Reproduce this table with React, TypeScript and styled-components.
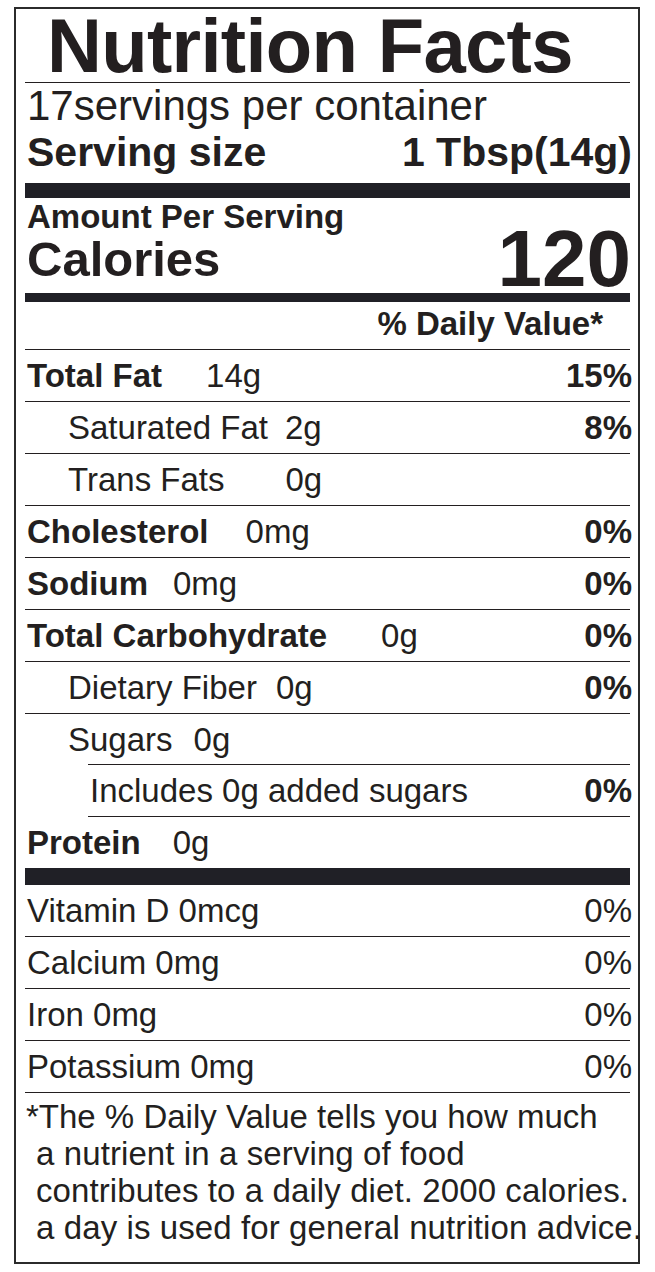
import React from "react";
import styled, { createGlobalStyle } from "styled-components";

const GlobalStyle = createGlobalStyle`
  html, body { margin: 0; padding: 0; background: #ffffff; }
  body {
    font-family: "Liberation Sans", Arial, Helvetica, sans-serif;
    color: #231f20;
  }
`;

const INK = "#231f20";
const BAR = "#202026";

const Label = styled.section`
  box-sizing: border-box;
  width: 626px;
  margin: 7px 0 0 14px;
  border: 2px solid #2b2b2b;
  padding: 0 8px 0 9px;
  display: flex;
  flex-direction: column;
`;

const Title = styled.h1`
  margin: 0;
  padding-left: 22px;
  font-size: 76px;
  line-height: 73px;
  font-weight: 700;
  letter-spacing: -0.7px;
  border-bottom: 1px solid ${INK};
  white-space: nowrap;
`;

const ServingBlock = styled.div`
  display: flex;
  flex-direction: column;
  padding: 1px 0 7px 2px;
`;

const Servings = styled.div`
  font-size: 42px;
  line-height: 44px;
  white-space: nowrap;
`;

const ServingSize = styled.div`
  display: flex;
  justify-content: space-between;
  font-size: 41px;
  line-height: 48px;
  font-weight: 700;
  margin-right: -2px;
  white-space: nowrap;
`;

const Bar = styled.div<{ $h: number }>`
  height: ${(p) => p.$h}px;
  background: ${BAR};
`;

const CalorieBlock = styled.div`
  display: flex;
  justify-content: space-between;
  align-items: flex-end;
  padding: 2px 0 0 2px;
  height: 95px;
  box-sizing: border-box;
`;

const CalorieLeft = styled.div`
  display: flex;
  flex-direction: column;
  padding-bottom: 9px;
`;

const AmountPer = styled.div`
  font-size: 33px;
  line-height: 34px;
  font-weight: 700;
`;

const CaloriesWord = styled.div`
  font-size: 49px;
  line-height: 50px;
  font-weight: 700;
`;

const CalorieNumber = styled.div`
  font-size: 80px;
  line-height: 64px;
  font-weight: 700;
  margin-bottom: 2px;
  margin-right: -1px;
`;

const DVHeader = styled.div`
  height: 47px;
  display: flex;
  justify-content: flex-end;
  align-items: flex-start;
  padding-right: 27px;
  font-size: 33px;
  line-height: 44px;
  font-weight: 700;
  border-bottom: 1px solid ${INK};
`;

const Row = styled.div<{ $indent?: number; $ruleIndent?: number; $noRule?: boolean }>`
  display: flex;
  align-items: center;
  height: 51px;
  font-size: 33px;
  line-height: 44px;
  white-space: nowrap;
  padding-left: ${(p) => (p.$indent ?? 0) + 2}px;
  margin-left: ${(p) => p.$ruleIndent ?? 0}px;
  border-bottom: ${(p) => (p.$noRule ? "none" : `1px solid ${INK}`)};
`;

const IncludesRow = styled(Row)`
  border-top: 1px solid ${INK};
  margin-top: -1px;
`;

const Name = styled.span<{ $bold?: boolean }>`
  font-weight: ${(p) => (p.$bold ? 700 : 400)};
`;

const Amount = styled.span<{ $gap: number }>`
  margin-left: ${(p) => p.$gap}px;
`;

const Percent = styled.span<{ $bold?: boolean }>`
  margin-left: auto;
  margin-right: -2px;
  font-weight: ${(p) => (p.$bold ? 700 : 400)};
`;

const Footnote = styled.div`
  display: flex;
  flex-direction: column;
  padding: 5px 0 16px 1px;
  font-size: 33px;
  line-height: 37px;
`;

const FootLine = styled.div<{ $indent?: boolean }>`
  white-space: nowrap;
  padding-left: ${(p) => (p.$indent ? 10 : 0)}px;
  letter-spacing: ${(p) => (p.$indent ? "0.1px" : "0")};
`;

type Nutrient = {
  name: string;
  amount?: string;
  gap?: number;
  pct?: string;
  bold?: boolean;
  indent?: number;
  ruleIndent?: number;
  noRule?: boolean;
};

const nutrients: Nutrient[] = [
  { name: "Total Fat", amount: "14g", gap: 44, pct: "15%", bold: true },
  { name: "Saturated Fat", amount: "2g", gap: 17, pct: "8%", indent: 41 },
  { name: "Trans Fats", amount: "0g", gap: 61, indent: 41 },
  { name: "Cholesterol", amount: "0mg", gap: 37, pct: "0%", bold: true },
  { name: "Sodium", amount: "0mg", gap: 25, pct: "0%", bold: true },
  { name: "Total Carbohydrate", amount: "0g", gap: 54, pct: "0%", bold: true },
  { name: "Dietary Fiber", amount: "0g", gap: 19, pct: "0%", indent: 41 },
  { name: "Sugars", amount: "0g", gap: 21, indent: 41, noRule: true },
  { name: "Includes 0g added sugars", pct: "0%", ruleIndent: 63, indent: 0 },
  { name: "Protein", amount: "0g", gap: 32, bold: true, noRule: true },
];

const vitamins = [
  { name: "Vitamin D 0mcg", pct: "0%" },
  { name: "Calcium 0mg", pct: "0%" },
  { name: "Iron 0mg", pct: "0%" },
  { name: "Potassium 0mg", pct: "0%" },
];

export default function App() {
  return (
    <>
      <GlobalStyle />
      <Label>
        <Title>Nutrition Facts</Title>
        <ServingBlock>
          <Servings>17servings per container</Servings>
          <ServingSize>
            <span>Serving size</span>
            <span>1 Tbsp(14g)</span>
          </ServingSize>
        </ServingBlock>
        <Bar $h={15} />
        <CalorieBlock>
          <CalorieLeft>
            <AmountPer>Amount Per Serving</AmountPer>
            <CaloriesWord>Calories</CaloriesWord>
          </CalorieLeft>
          <CalorieNumber>120</CalorieNumber>
        </CalorieBlock>
        <Bar $h={9} />
        <DVHeader>% Daily Value*</DVHeader>
        {nutrients.map((n) => {
          const RowComp = n.ruleIndent ? IncludesRow : Row;
          return (
            <RowComp
              key={n.name}
              $indent={n.ruleIndent ? 0 : n.indent}
              $ruleIndent={n.ruleIndent}
              $noRule={n.noRule}
            >
              <Name $bold={n.bold}>{n.name}</Name>
              {n.amount && <Amount $gap={n.gap ?? 12}>{n.amount}</Amount>}
              {n.pct && <Percent $bold>{n.pct}</Percent>}
            </RowComp>
          );
        })}
        <Bar $h={17} />
        {vitamins.map((v) => (
          <Row key={v.name}>
            <Name>{v.name}</Name>
            <Percent>{v.pct}</Percent>
          </Row>
        ))}
        <Footnote>
          <FootLine>*The % Daily Value tells you how much</FootLine>
          <FootLine $indent>a nutrient in a serving of food</FootLine>
          <FootLine $indent>contributes to a daily diet. 2000 calories.</FootLine>
          <FootLine $indent>a day is used for general nutrition advice.</FootLine>
        </Footnote>
      </Label>
    </>
  );
}
